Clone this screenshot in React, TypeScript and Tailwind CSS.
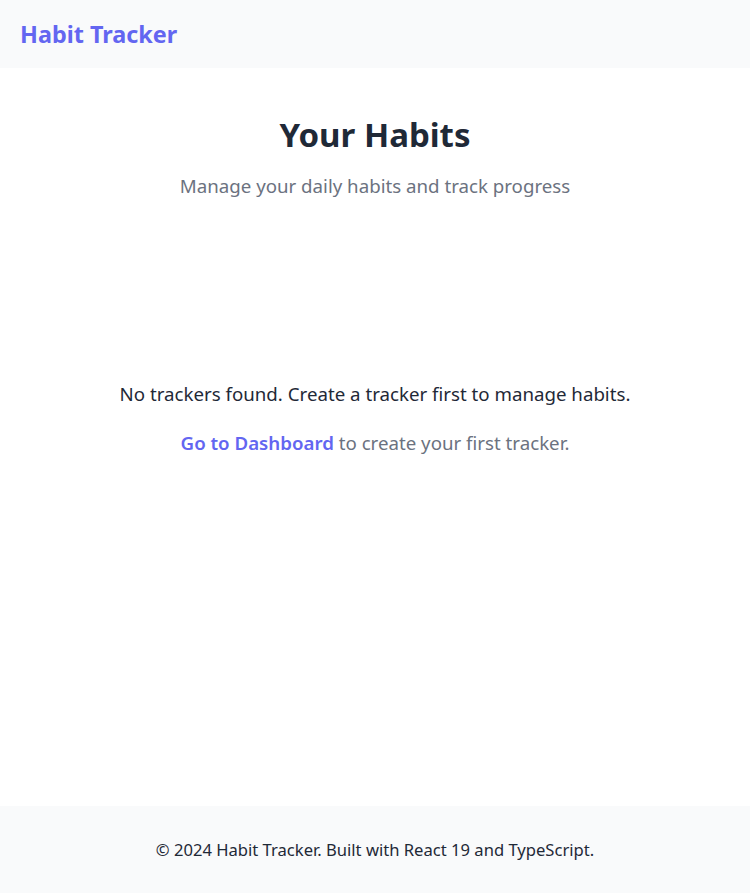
import React from "react";

export default function App() {
  return (
    <div className="min-h-screen flex flex-col bg-white" style={{ fontFamily: '"Noto Sans", "Open Sans", sans-serif' }}>
      <header className="h-[68px] bg-[#f9fafb] flex items-center px-5">
        <h1 className="text-[23.4px] leading-8 font-bold text-[#6366f1]">Habit Tracker</h1>
      </header>
      <main className="flex-1 flex flex-col items-center pt-[47px]">
        <h2 className="text-[33px] leading-[40px] font-bold text-[#1f2937]">Your Habits</h2>
        <p className="mt-[17px] text-[18.7px] leading-7 text-[#6b7280]">Manage your daily habits and track progress</p>
        <p className="mt-[180px] text-[18.7px] leading-7 text-[#1f2937]">No trackers found. Create a tracker first to manage habits.</p>
        <p className="mt-[21px] text-[18.7px] leading-7 text-[#6b7280]">
          <a href="#" className="font-semibold text-[#6366f1]">Go to Dashboard</a> to create your first tracker.
        </p>
      </main>
      <footer className="h-[87px] bg-[#f9fafb] flex items-center justify-center">
        <p className="text-[16.6px] leading-6 text-[#1f2937]">© 2024 Habit Tracker. Built with React 19 and TypeScript.</p>
      </footer>
    </div>
  );
}
